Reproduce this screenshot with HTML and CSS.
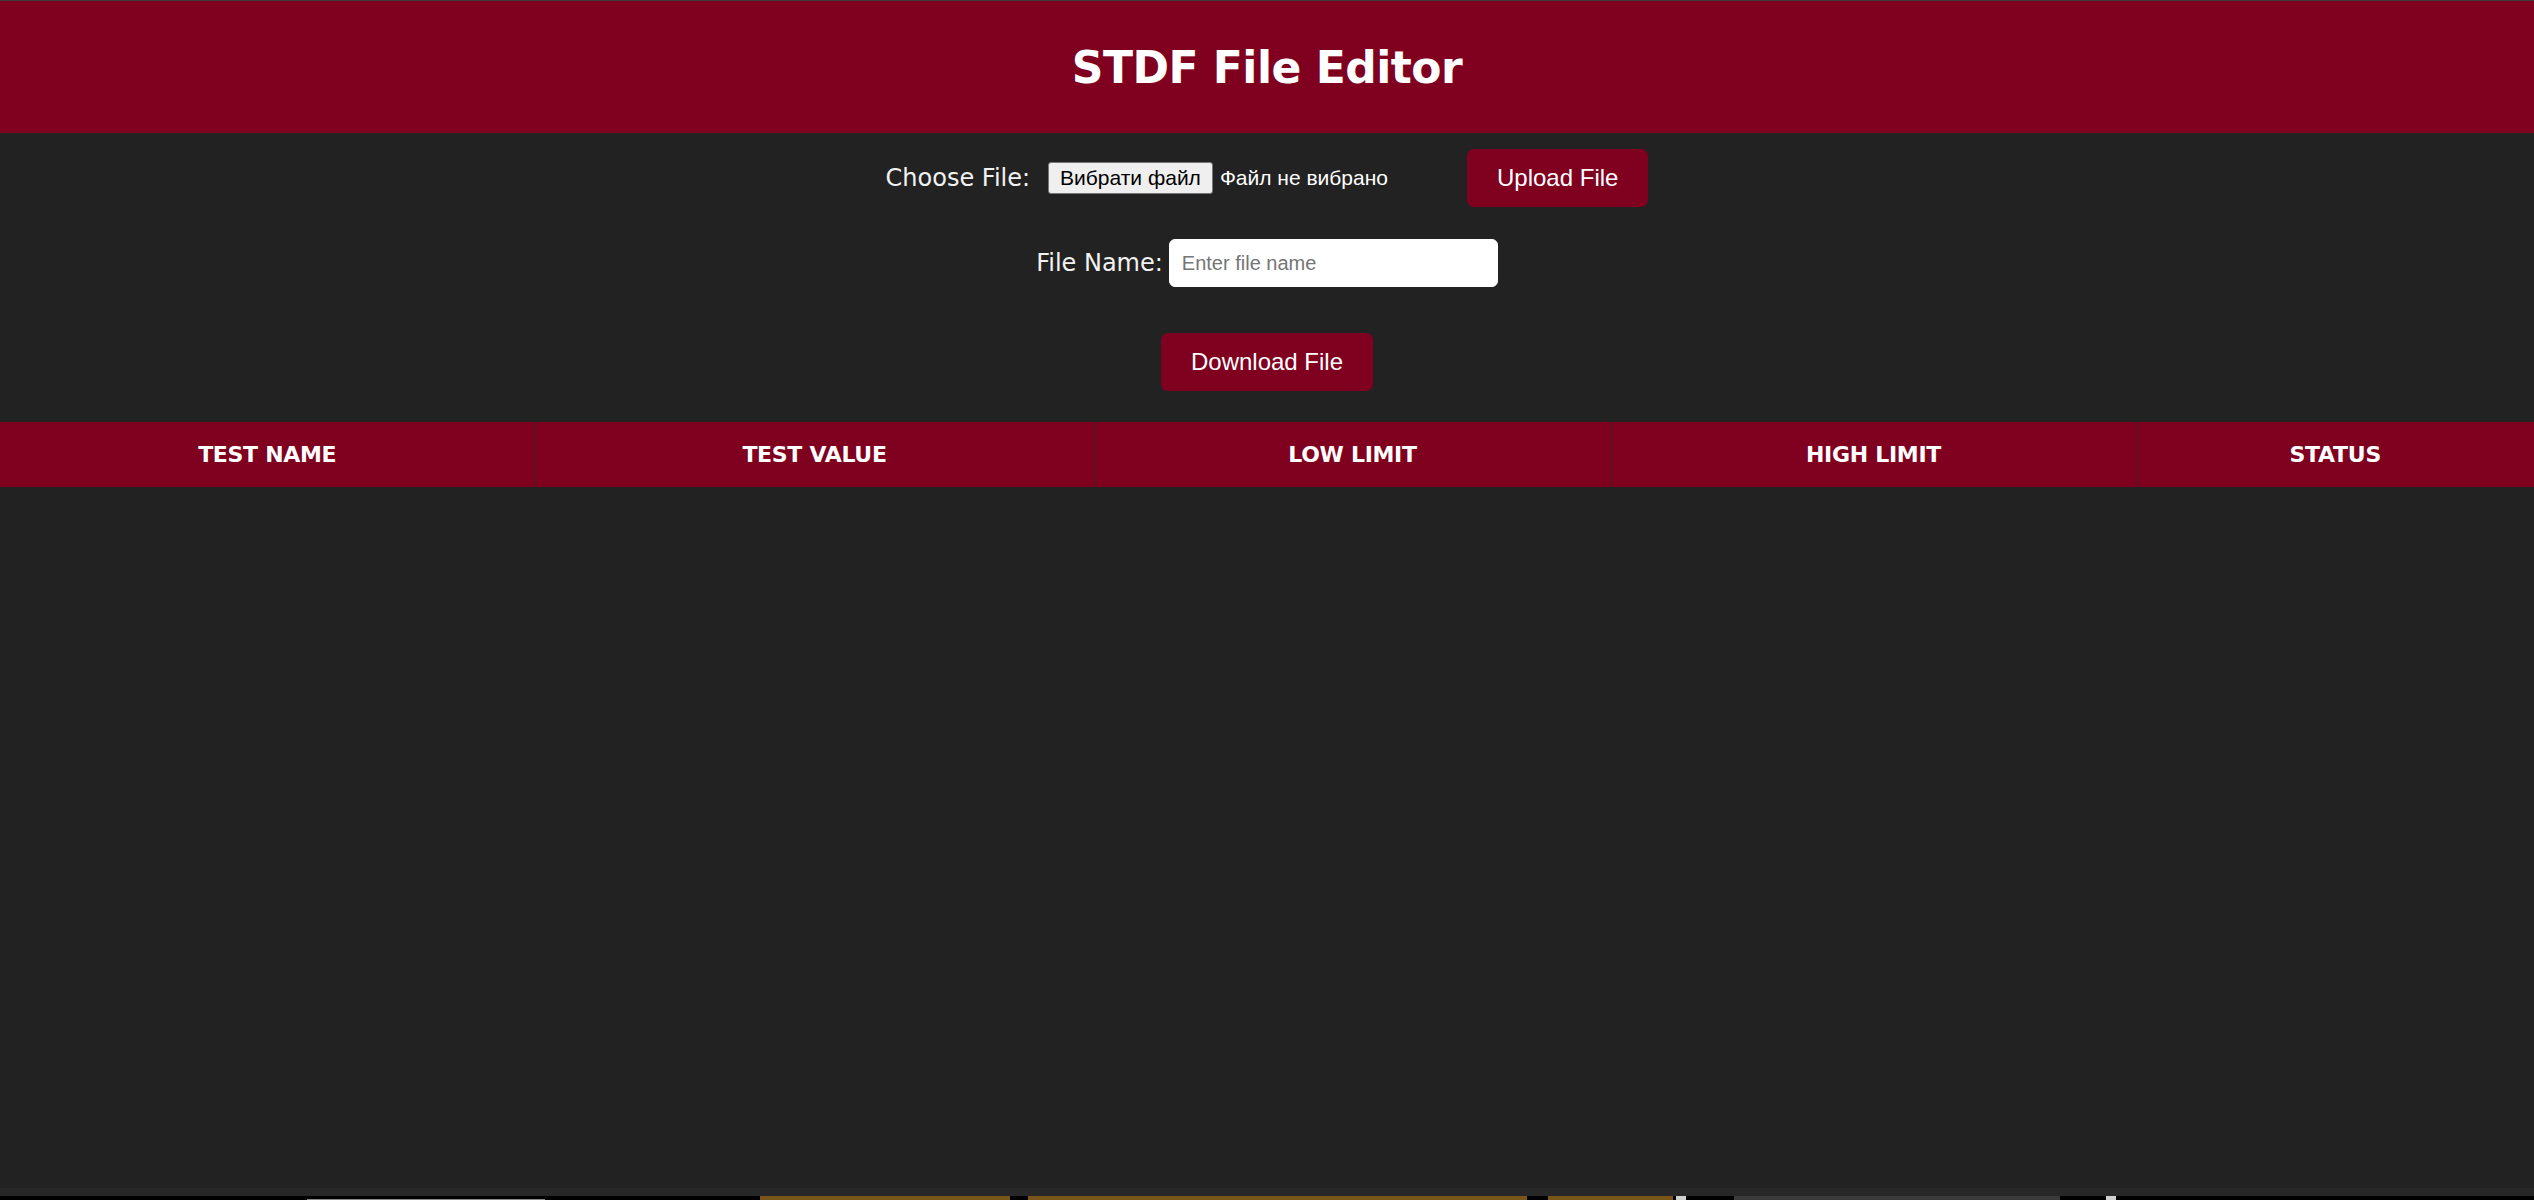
FILE: index.html
```html
<!DOCTYPE html>
<html lang="uk">
<head>
<meta charset="utf-8">
<title>STDF File Editor</title>
<link rel="stylesheet" href="styles.css">
</head>
<body>
<div class="page">
  <header class="app-header">
    <h1 class="title">STDF File Editor</h1>
  </header>
  <main class="main">
    <section class="controls">
      <div class="row row-upload">
        <label class="label label-choose">Choose File:</label>
        <span class="file-input">
          <button class="file-btn" type="button">Вибрати файл</button>
          <span class="file-status">Файл не вибрано</span>
        </span>
        <button class="btn btn-upload" type="button">Upload File</button>
      </div>
      <div class="row row-name">
        <label class="label label-name">File Name:</label>
        <input class="name-input" type="text" placeholder="Enter file name">
      </div>
      <div class="row row-download">
        <button class="btn" type="button">Download File</button>
      </div>
    </section>
    <table class="results">
      <colgroup>
        <col class="c1"><col class="c2"><col class="c3"><col class="c4"><col class="c5">
      </colgroup>
      <thead>
        <tr>
          <th>Test Name</th>
          <th>Test Value</th>
          <th>Low Limit</th>
          <th>High Limit</th>
          <th>Status</th>
        </tr>
      </thead>
      <tbody></tbody>
    </table>
  </main>
  <div class="os-strip">
    <span class="bit bit-gray-line"></span>
    <span class="bit bit-brown1"></span>
    <span class="bit bit-brown2"></span>
    <span class="bit bit-brown3"></span>
    <span class="bit bit-white1"></span>
    <span class="bit bit-dark"></span>
    <span class="bit bit-white2"></span>
  </div>
</div>
</body>
</html>
```

FILE: styles.css
```css
* { box-sizing: border-box; }

html, body {
  margin: 0;
  padding: 0;
  background: #222222;
}

.page {
  display: flex;
  flex-direction: column;
  height: 1200px;
  border-top: 1px solid #3d3d3d;
  font-family: "DejaVu Sans", "Noto Sans", sans-serif;
}

.app-header {
  height: 132px;
  background: #800020;
  display: flex;
  align-items: center;
  justify-content: center;
}

.title {
  margin: 0;
  color: #ffffff;
  font-family: "DejaVu Sans", sans-serif;
  font-weight: 700;
  font-size: 44px;
  letter-spacing: -0.5px;
}

.main {
  flex: 1;
  background: #222222;
}

.controls {
  padding-top: 16px;
}

.row {
  display: flex;
  align-items: center;
  justify-content: center;
}

.row-upload { height: 58px; }
.row-name { height: 48px; margin-top: 32px; }
.row-download { height: 58px; margin-top: 46px; }

.label {
  color: #f2f2f2;
  font-family: "DejaVu Sans", sans-serif;
  font-size: 24px;
  font-weight: 400;
}

.label-choose { margin-right: 18px; }
.label-name { margin-right: 6px; }

.file-input {
  display: flex;
  align-items: center;
  font-family: "Liberation Sans", Arial, sans-serif;
  font-size: 21px;
}

.file-btn {
  height: 32px;
  padding: 0 11px;
  background: #efefef;
  color: #000000;
  border: 1px solid #767676;
  border-radius: 3px;
  font-family: "Liberation Sans", Arial, sans-serif;
  font-size: 21px;
}

.file-status {
  color: #ffffff;
  margin-left: 7px;
}

.btn {
  height: 58px;
  padding: 0 30px;
  background: #800020;
  color: #ffffff;
  border: none;
  border-radius: 7px;
  font-family: "Liberation Sans", Arial, sans-serif;
  font-size: 24px;
}

.btn-upload { margin-left: 79px; }

.name-input {
  width: 329px;
  height: 48px;
  padding: 0 12px;
  border: 1px solid #ffffff;
  border-radius: 6px;
  background: #ffffff;
  font-family: "Liberation Sans", Arial, sans-serif;
  font-size: 20px;
  color: #000000;
  outline: none;
}

.name-input::placeholder { color: #757575; }

.results {
  width: 100%;
  margin-top: 31px;
  border-collapse: collapse;
  table-layout: fixed;
}

.c1 { width: 535px; }
.c2 { width: 559px; }
.c3 { width: 517px; }
.c4 { width: 525px; }
.c5 { width: 398px; }

.results th {
  height: 65px;
  padding: 0;
  background: #800020;
  color: #ffffff;
  font-family: "DejaVu Sans", sans-serif;
  font-weight: 700;
  font-size: 22px;
  text-transform: uppercase;
  text-align: center;
  letter-spacing: -0.3px;
  border-right: 1px solid #3a2226;
}

.results th:last-child { border-right: none; }

.os-strip {
  position: relative;
  height: 12px;
  background: #000000;
  border-top: 8px solid #272727;
}

.bit {
  position: absolute;
  top: 0;
  height: 4px;
}

.bit-gray-line { left: 307px; width: 238px; top: 3px; height: 1px; background: #8a8a8a; }
.bit-brown1 { left: 760px; width: 250px; background: #7a5519; }
.bit-brown2 { left: 1028px; width: 499px; background: #7a5519; }
.bit-brown3 { left: 1548px; width: 125px; background: #7a5519; }
.bit-white1 { left: 1676px; width: 10px; background: #cfcfcf; }
.bit-dark { left: 1734px; width: 326px; background: #3a3a3a; }
.bit-white2 { left: 2106px; width: 10px; background: #cfcfcf; }
```
